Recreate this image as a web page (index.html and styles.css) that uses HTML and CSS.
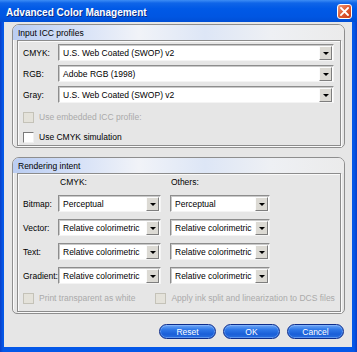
FILE: index.html
```html
<!DOCTYPE html>
<html lang="en">
<head>
  <meta charset="UTF-8" />
  <title>Advanced Color Management</title>
  <link rel="stylesheet" href="styles.css">
</head>
<body>
  <div class="window">
    <div class="titlebar">
      <span class="title">Advanced Color Management</span>
      <span class="close">
        <svg width="9" height="9" viewBox="0 0 9 9"><path d="M1 1L8 8M8 1L1 8" stroke="#fff" stroke-width="1.8" stroke-linecap="square"/></svg>
      </span>
    </div>

    <div class="client">
      <section class="group group-icc">
        <div class="group-head">Input ICC profiles</div>
        <div class="group-body">
          <div class="field">
            <span class="label">CMYK:</span>
            <div class="combo combo-wide"><span class="value">U.S. Web Coated (SWOP) v2</span><span class="arrow"></span></div>
          </div>
          <div class="field">
            <span class="label">RGB:</span>
            <div class="combo combo-wide"><span class="value">Adobe RGB (1998)</span><span class="arrow"></span></div>
          </div>
          <div class="field">
            <span class="label">Gray:</span>
            <div class="combo combo-wide"><span class="value">U.S. Web Coated (SWOP) v2</span><span class="arrow"></span></div>
          </div>
          <div class="check check-first disabled"><span class="box"></span>Use embedded ICC profile:</div>
          <div class="check check-second"><span class="box"></span>Use CMYK simulation</div>
        </div>
      </section>

      <section class="group group-intent">
        <div class="group-head">Rendering intent</div>
        <div class="group-body">
          <div class="col-heads">
            <span class="col-head">CMYK:</span>
            <span class="col-head col-head-others">Others:</span>
          </div>
          <div class="field intent-row">
            <span class="label">Bitmap:</span>
            <div class="combo combo-cmyk"><span class="value">Perceptual</span><span class="arrow"></span></div>
            <div class="combo combo-others"><span class="value">Perceptual</span><span class="arrow"></span></div>
          </div>
          <div class="field intent-row">
            <span class="label">Vector:</span>
            <div class="combo combo-cmyk"><span class="value">Relative colorimetric</span><span class="arrow"></span></div>
            <div class="combo combo-others"><span class="value">Relative colorimetric</span><span class="arrow"></span></div>
          </div>
          <div class="field intent-row">
            <span class="label">Text:</span>
            <div class="combo combo-cmyk"><span class="value">Relative colorimetric</span><span class="arrow"></span></div>
            <div class="combo combo-others"><span class="value">Relative colorimetric</span><span class="arrow"></span></div>
          </div>
          <div class="field intent-row">
            <span class="label">Gradient:</span>
            <div class="combo combo-cmyk"><span class="value">Relative colorimetric</span><span class="arrow"></span></div>
            <div class="combo combo-others"><span class="value">Relative colorimetric</span><span class="arrow"></span></div>
          </div>
          <div class="check-row">
            <div class="check disabled"><span class="box"></span>Print transparent as white</div>
            <div class="check disabled check-dcs"><span class="box"></span>Apply ink split and linearization to DCS files</div>
          </div>
        </div>
      </section>

      <div class="buttons">
        <button class="btn">Reset</button>
        <button class="btn">OK</button>
        <button class="btn">Cancel</button>
      </div>
    </div>
  </div>
</body>
</html>
```

FILE: styles.css
```css
body {
  margin: 0;
  padding: 0;
  font-family: 'Liberation Sans', Arial, sans-serif;
  font-size: 8.5px;
  color: #000;
  background: #fff;
}

.window {
  width: 357px;
  height: 352px;
  display: flex;
  flex-direction: column;
  background: linear-gradient(90deg, #0a3fc8, #0458e8 3px, #0458e8 calc(100% - 3px), #0a3fc8);
}

.titlebar {
  height: 22px;
  flex-shrink: 0;
  display: flex;
  align-items: center;
  justify-content: space-between;
  padding: 0 5px 0 6px;
  background: linear-gradient(180deg, #3d8df5 0%, #0f65e8 14%, #0059e6 40%, #0056e2 75%, #004fd6 100%);
}

.title {
  color: #fff;
  font-weight: bold;
  font-size: 10px;
  text-shadow: 1px 1px 0 #0a2c86;
  margin-top: 3px;
}

.close {
  width: 13px;
  height: 13px;
  border: 1px solid #fff;
  border-radius: 3px;
  background: linear-gradient(135deg, #f09a7a 0%, #e06038 45%, #c93a16 100%);
  display: flex;
  align-items: center;
  justify-content: center;
  margin-top: 1px;
}

.client {
  flex: 1;
  margin: 0 5px 5px 4px;
  padding: 2px 7px 0 8px;
  background: #e6e6e6;
}

.group {
  border: 1px solid #8e8e8e;
  border-radius: 7px 7px 5px 5px;
  padding: 0 3px 1px 4px;
  box-shadow: inset 1px 1px 0 #fbfbfb;
}

.group-intent {
  margin-top: 9px;
}

.group-head {
  height: 15px;
  line-height: 16px;
  margin: 0 -3px 0 -4px;
  padding-left: 5px;
  border-radius: 6px 6px 0 0;
  background: linear-gradient(90deg, #bacdf2 0%, #d3dff7 18%, #f1f3f8 38%, #dde6f6 58%, #eef0f4 78%, #ebebeb 100%);
}

.group-body {
  border: 1px solid #8c8c8c;
  box-shadow: inset 1px 1px 0 #fafafa, 1px 1px 0 #fafafa;
  padding: 3px 0 1px 5px;
}

.field {
  display: flex;
  align-items: center;
  height: 17px;
  margin-bottom: 4px;
}

.label {
  width: 35px;
  flex-shrink: 0;
}

.combo {
  height: 17px;
  box-sizing: border-box;
  display: flex;
  align-items: center;
  justify-content: space-between;
  background: #fff;
  border: 1px solid;
  border-color: #8d8d8d #f4f4f4 #f4f4f4 #8d8d8d;
  box-shadow: inset 1px 1px 0 #c9c9c9;
  padding: 1px 1px 1px 4px;
}

.combo-wide {
  width: 276px;
}

.combo-cmyk {
  width: 103px;
}

.combo-others {
  width: 100px;
  margin-left: 9px;
}

.arrow {
  width: 13px;
  height: 14px;
  box-sizing: border-box;
  background: #dcdad4;
  border: 1px solid;
  border-color: #fbfbfb #7e7e7e #7e7e7e #fbfbfb;
  display: flex;
  align-items: center;
  justify-content: center;
}

.arrow::after {
  content: '';
  width: 0;
  height: 0;
  border-left: 3px solid transparent;
  border-right: 3px solid transparent;
  border-top: 3px solid #000;
  margin-top: 1px;
}

.check {
  display: flex;
  align-items: center;
  height: 14px;
}

.check-first {
  margin-top: 7px;
}

.check-second {
  margin-top: 6px;
}

.box {
  width: 9px;
  height: 9px;
  background: #fff;
  border: 1px solid;
  border-color: #7a7a7a #f2f2f2 #f2f2f2 #7a7a7a;
  margin-right: 5px;
}

.disabled {
  color: #aaaaaa;
}

.disabled .box {
  background: #e4e2da;
  border-color: #c4c2b8;
}

.group-intent .group-body {
  padding: 2px 0 6px 5px;
}

.col-heads {
  display: flex;
  height: 12px;
  align-items: center;
  margin-bottom: 7px;
}

.col-head {
  margin-left: 37px;
}

.col-head-others {
  margin-left: 84px;
}

.intent-row {
  margin-bottom: 7px;
}

.check-row {
  display: flex;
  margin-top: 7px;
}

.check-dcs {
  margin-left: 20px;
}

.buttons {
  display: flex;
  justify-content: flex-end;
  gap: 7px;
  margin-top: 10px;
  padding-right: 1px;
}

.btn {
  width: 57px;
  height: 15px;
  padding: 0;
  font-family: 'Liberation Sans', Arial, sans-serif;
  font-size: 8.5px;
  color: #fff;
  border: 1px solid #0d2d8c;
  border-radius: 8px;
  background: linear-gradient(180deg, #6ea6f6 0%, #2f78e8 35%, #1a5fd8 70%, #2b6fe0 100%);
  box-shadow: inset 0 0 0 1px rgba(160, 200, 255, 0.45);
}
```
